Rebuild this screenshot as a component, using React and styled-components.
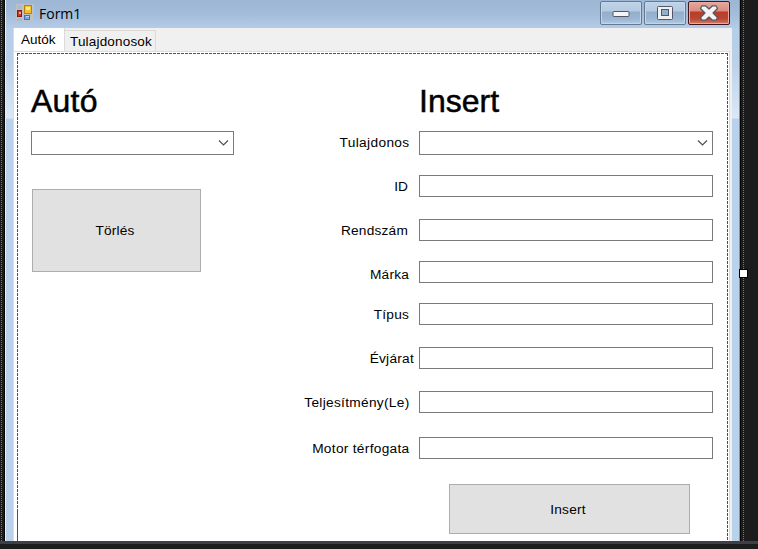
import React from "react";
import styled, { createGlobalStyle } from "styled-components";

const GlobalStyle = createGlobalStyle`
  * { box-sizing: border-box; }
  body { margin: 0; background: #1c1c1c; }
`;

const Designer = styled.div`
  width: 758px;
  height: 549px;
  display: flex;
  flex-direction: column;
  overflow: hidden;
  background: #1c1c1c;
  color: #000;
  font: 13.7px/16px "Liberation Sans", Arial, sans-serif;
`;

const Workspace = styled.div`
  display: flex;
  height: 541px;
  overflow: hidden;
`;

const Splitter = styled.div`
  height: 3px;
  background: #3f4046;
`;

const DottedRail = styled.div`
  width: ${(p) => p.$width}px;
  flex: none;
  padding-left: ${(p) => p.$inset}px;
  background: #1c1c1c;
  border-${(p) => p.$edge}: 1px solid #050505;
  &::before {
    content: "";
    display: block;
    width: 1px;
    height: 100%;
    background: repeating-linear-gradient(#777 0 1px, #1c1c1c 1px 2px);
  }
`;

const Window = styled.div`
  width: 735px;
  flex: none;
  position: relative;
  display: flex;
  flex-direction: column;
  border-left: 1px solid #e9eff6;
  border-right: 1px solid #38b4dc;
  background: linear-gradient(#9bb7d4 0, #b5cde7 27px, #bad0e9 60px, #dbe8f5 118px, #b9d1ea 119px);
`;

const TitleBar = styled.div`
  height: 28px;
  flex: none;
  display: flex;
  align-items: flex-start;
  padding: 0 9px 0 10px;
  background: linear-gradient(#9cb6d3, #a2bcd9 50%, #b5cce7);
`;

const Title = styled.span`
  flex: 1;
  padding: 4px 0 0 5px;
  font: 14px/20px "Open Sans", "Noto Sans", sans-serif;
`;

const AppIcon = styled.svg`
  margin-top: 4px;
  flex: none;
`;

const Caption = styled.button`
  width: 42px;
  height: 24px;
  margin: 1px 0 0 2px;
  padding: 0;
  display: grid;
  place-items: center;
  border: 1px solid ${(p) => (p.$close ? "#43141e" : "#657993")};
  border-radius: 2px;
  box-shadow: inset 0 0 0 1px ${(p) => (p.$close ? "#e9aa9f" : "#c2d7eb")};
  background: ${(p) =>
    p.$close
      ? "linear-gradient(#e5a99e 0, #d98c7e 9px, #b83d28 10px, #b94731 17px, #d2806c)"
      : "linear-gradient(#c0d4e8 0, #b4cae1 9px, #92aecb 10px, #9ab6d3 17px, #b3cce5)"};
`;

const Client = styled.div`
  flex: 1;
  margin: 0 7px;
  display: flex;
  flex-direction: column;
  background: #f0f0f0;
`;

const Tabs = styled.div`
  height: 23px;
  flex: none;
  display: flex;
  align-items: flex-end;
  background: #f0f0f0;
`;

const Tab = styled.div`
  width: ${(p) => (p.$active ? 52 : 91)}px;
  height: ${(p) => (p.$active ? 23 : 21)}px;
  padding: ${(p) => (p.$active ? "4px 0 0 7px" : "3px 0 0 5px")};
  border: solid #dadada;
  border-width: ${(p) => (p.$active ? "0 1px 0 1px" : "1px 1px 0 0")};
  background: ${(p) => (p.$active ? "#fff" : "#f0f0f0")};
  font-size: 13.5px;
  letter-spacing: ${(p) => (p.$active ? 0 : 0.18)}px;
  white-space: nowrap;
`;

const TabFrame = styled.div`
  flex: 1;
  margin-right: 2px;
  padding: 1px 1px 0 3px;
  border: solid #dcdcdc;
  border-width: 1px 1px 0 1px;
  background: #fff;
`;

const Page = styled.div`
  height: 100%;
  display: flex;
  padding-top: 1px;
  background:
    repeating-linear-gradient(90deg, #505050 0 3px, #fff 3px 4px) 0 0 / 100% 1px no-repeat,
    linear-gradient(#505050, #505050) 0 459px / 1px 30px no-repeat,
    repeating-linear-gradient(#505050 0 3px, #fff 3px 4px) 0 0 / 1px 100% no-repeat,
    repeating-linear-gradient(#505050 0 3px, #fff 3px 4px) 100% 0 / 1px 100% no-repeat,
    #fff;
`;

const AutoPane = styled.section`
  width: 217px;
  flex: none;
  padding: 27px 0 0 14px;
`;

const InsertPane = styled.section`
  flex: 1;
  padding: 27px 15px 0 0;
`;

const Heading = styled.h1`
  height: 40px;
  margin: 0 0 10px ${(p) => p.$indent || 0}px;
  font: 400 32px/41px "Liberation Sans", Arial, sans-serif;
  letter-spacing: ${(p) => p.$spacing}px;
  -webkit-text-stroke: 0.5px #000;
`;

const Box = styled.div`
  flex: 1;
  height: ${(p) => (p.$select ? 24 : 22)}px;
  display: flex;
  align-items: center;
  justify-content: flex-end;
  padding-right: 4px;
  border: 1px solid #7a7a7a;
  background: #fff;
`;

const PickBox = styled(Box)`
  width: 203px;
`;

const Field = styled.div`
  display: flex;
  margin-bottom: ${(p) => p.$gap}px;
`;

const Label = styled.label`
  width: 185px;
  flex: none;
  padding: ${(p) => p.$top}px ${(p) => p.$right}px 0 0;
  text-align: right;
  white-space: nowrap;
  letter-spacing: ${(p) => p.$spacing || 0}px;
`;

const PushButton = styled.button`
  display: block;
  width: ${(p) => p.$w}px;
  height: ${(p) => p.$h}px;
  margin: ${(p) => p.$margin};
  padding: 1px 3px 0 0;
  border: 1px solid #adadad;
  background: #e1e1e1;
  color: #000;
  font: inherit;
  letter-spacing: 0.2px;
`;

const ResizeHandle = styled.span`
  position: absolute;
  right: -9px;
  top: 269px;
  width: 9px;
  height: 9px;
  border: 1px solid #000;
  background: #fff;
`;

const Chevron = () => (
  <svg width="11" height="8" viewBox="0 0 11 8" fill="none" stroke="#505050" strokeWidth="1.2">
    <path d="M1 1.500 5.500 6 10 1.500" />
  </svg>
);

const fields = [
  { label: "Tulajdonos", select: true, gap: 20, top: 4, right: 9.5, spacing: 0.35 },
  { label: "ID", gap: 22, top: 4, right: 11 },
  { label: "Rendszám", gap: 20, top: 4, right: 11, spacing: 0.2 },
  { label: "Márka", gap: 20, top: 6, right: 10, spacing: 0.2 },
  { label: "Típus", gap: 22, top: 4, right: 10, spacing: 0.2 },
  { label: "Évjárat", gap: 22, top: 4, right: 5, spacing: 0.25 },
  { label: "Teljesítmény(Le)", gap: 24, top: 4, right: 9.5, spacing: 0.3 },
  { label: "Motor térfogata", gap: 25, top: 4, right: 9.5, spacing: 0.3 },
];

export default function App() {
  return (
    <Designer>
      <GlobalStyle />
      <Workspace>
        <DottedRail $width={5} $inset={1} $edge="right" />
        <Window>
          <TitleBar>
            <AppIcon width="18" height="18" viewBox="0 0 18 18">
              <path fill="#bfc2c5" d="M0 0h18v18H0z" />
              <path fill="#a9bbcd" d="M1 1h5v4H1zM1 14h5v3H1z" />
              <path fill="#8f160e" d="M1 6h5v7H1z" />
              <path fill="#c9372a" d="M2 7h3v5H2z" />
              <path fill="#f0a39a" d="M3 8h2v2H3z" />
              <path fill="#b98208" d="M8 1h8v9H8z" />
              <path fill="#f2c22d" d="M9 2h6v7H9z" />
              <path fill="#ffe68b" d="M10 3h4v3h-4z" />
              <path fill="#3f73c4" d="M8 11h6v5H8z" />
              <path fill="#78a9ed" d="M9 12h4v3H9z" />
              <path fill="#bad5fa" d="M10 12h3v1h-3z" />
            </AppIcon>
            <Title>Form1</Title>
            <Caption aria-label="Minimize">
              <svg width="18" height="8" viewBox="0 0 18 8">
                <rect x="1" y="2.5" width="16" height="5" rx="1" fill="#f5f5f5" stroke="#535666" />
              </svg>
            </Caption>
            <Caption aria-label="Maximize">
              <svg width="18" height="16" viewBox="0 0 18 16">
                <rect x="1.5" y="1.5" width="15" height="13" rx="1" fill="#f0f0f0" stroke="#535666" />
                <rect x="5.5" y="4.5" width="7" height="6" fill="#94afcc" stroke="#535666" />
              </svg>
            </Caption>
            <Caption $close aria-label="Close">
              <svg width="20" height="16" viewBox="0 0 20 16" strokeLinejoin="round">
                <path
                  d="M3 .8h3.500L10 4l3.500-3.200H17l1.500 2.700L14 8l4.500 4.500L17 15.200h-3.500L10 12l-3.500 3.200H3L1.500 12.500 6 8 1.500 3.500z"
                  fill="#f4f4f4"
                  stroke="#535666"
                  strokeWidth="1.2"
                />
              </svg>
            </Caption>
          </TitleBar>
          <Client>
            <Tabs>
              <Tab $active>Autók</Tab>
              <Tab>Tulajdonosok</Tab>
            </Tabs>
            <TabFrame>
              <Page>
                <AutoPane>
                  <Heading $spacing={0.2}>Autó</Heading>
                  <PickBox $select>
                    <Chevron />
                  </PickBox>
                  <PushButton $w={169} $h={83} $margin="34px 0 0 1px">Törlés</PushButton>
                </AutoPane>
                <InsertPane>
                  <Heading $indent={185} $spacing={0}>Insert</Heading>
                  {fields.map((f) => (
                    <Field key={f.label} $gap={f.gap}>
                      <Label $top={f.top} $right={f.right} $spacing={f.spacing}>{f.label}</Label>
                      <Box $select={f.select}>{f.select && <Chevron />}</Box>
                    </Field>
                  ))}
                  <PushButton $w={241} $h={50} $margin="0 0 0 215px">Insert</PushButton>
                </InsertPane>
              </Page>
            </TabFrame>
          </Client>
          <ResizeHandle />
        </Window>
        <DottedRail $width={18} $inset={2} $edge="left" />
      </Workspace>
      <Splitter />
    </Designer>
  );
}
